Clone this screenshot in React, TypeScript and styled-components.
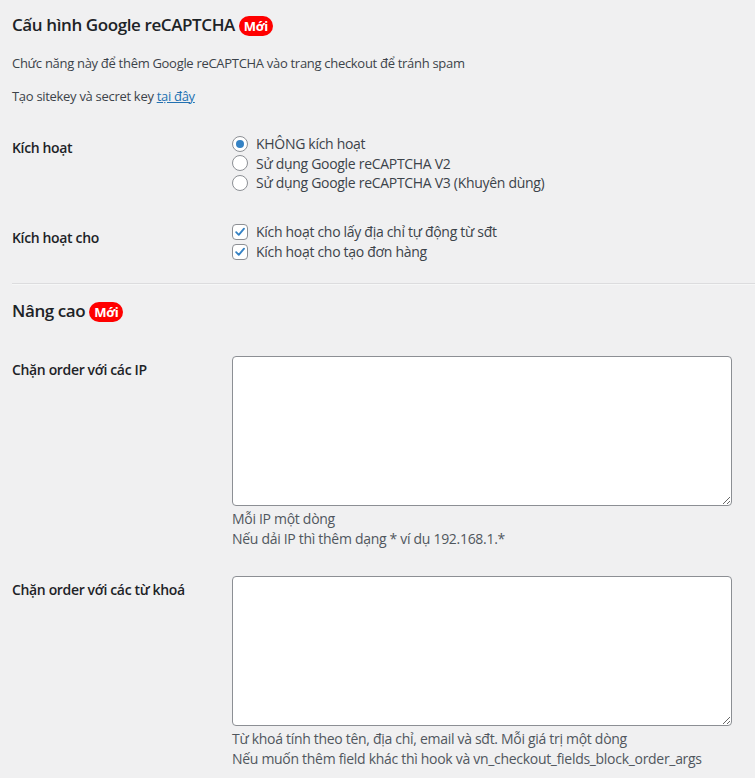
import React, { useState } from 'react';
import styled, { createGlobalStyle } from 'styled-components';

// WordPress admin palette
const colors = {
  bg: '#f0f0f1',
  text: '#3c434a',
  heading: '#1d2327',
  muted: '#50575e',
  link: '#2271b1',
  border: '#8c8f94',
  blue: '#3582c4',
  divider: '#dcdcde',
  badge: '#ff0000',
};

const GlobalStyle = createGlobalStyle`
  body {
    margin: 0;
    background: ${colors.bg};
    color: ${colors.text};
    font-family: "Open Sans", "Noto Sans", sans-serif;
    font-size: 13px;
    letter-spacing: -0.3px;
  }
  * { box-sizing: border-box; }
`;

const Page = styled.div`
  padding: 13px 0 0 12px;
`;

const Heading = styled.h2<{ $top?: number }>`
  display: flex;
  align-items: center;
  gap: 4px;
  margin: ${(p) => p.$top ?? 0}px 0 17px;
  font-size: 17px;
  font-weight: 600;
  line-height: 24px;
  letter-spacing: -0.4px;
  color: ${colors.heading};
`;

const Badge = styled.span`
  display: inline-block;
  height: 20px;
  padding: 0 5px;
  border-radius: 10px;
  background: ${colors.badge};
  color: #fff;
  font-size: 13px;
  font-weight: 700;
  line-height: 20px;
  letter-spacing: -0.3px;
  margin-top: 2px;
`;

const Para = styled.p`
  margin: 13px 0;
  line-height: 19.5px;
`;

const Link = styled.a`
  color: ${colors.link};
  text-decoration: underline;
`;

const Row = styled.div<{ $top?: number }>`
  display: flex;
  margin-top: ${(p) => p.$top ?? 0}px;
`;

const Th = styled.div`
  width: 210px;
  flex-shrink: 0;
  padding: 20px 10px 20px 0;
  font-size: 14px;
  font-weight: 600;
  line-height: 1.3;
  letter-spacing: -0.35px;
  color: ${colors.heading};
`;

const Td = styled.div<{ $pt: number; $pb: number }>`
  flex: 1;
  padding: ${(p) => p.$pt}px 10px ${(p) => p.$pb}px 10px;
  font-size: 14px;
`;

const Option = styled.label<{ $lh: number }>`
  display: flex;
  align-items: center;
  gap: 8px;
  line-height: ${(p) => p.$lh}px;
  color: ${colors.text};
  cursor: pointer;
`;

const HiddenInput = styled.input`
  display: none;
`;

const RadioCircle = styled.span<{ $on: boolean }>`
  width: 16px;
  height: 16px;
  flex-shrink: 0;
  border: 1px solid ${colors.border};
  border-radius: 50%;
  background: #fff;
  display: flex;
  align-items: center;
  justify-content: center;

  &::before {
    content: '';
    width: 8px;
    height: 8px;
    border-radius: 50%;
    background: ${colors.blue};
    display: ${(p) => (p.$on ? 'block' : 'none')};
  }
`;

const CheckBox = styled.span`
  width: 16px;
  height: 16px;
  flex-shrink: 0;
  border: 1px solid ${colors.border};
  border-radius: 4px;
  background: #fff;
  display: flex;
  align-items: center;
  justify-content: center;
`;

const Divider = styled.hr`
  margin: 16px 0 0;
  border: 0;
  border-top: 1px solid ${colors.divider};
  border-bottom: 1px solid #f6f7f7;
`;

const TextArea = styled.textarea`
  display: block;
  width: 500px;
  height: 150px;
  margin: 0;
  padding: 2px 6px;
  border: 1px solid ${colors.border};
  border-radius: 4px;
  background: #fff;
  font-family: inherit;
  font-size: 14px;
  color: ${colors.heading};
`;

const Description = styled.p`
  margin: 3px 0 0;
  line-height: 20px;
  color: ${colors.muted};
`;

const radios = [
  'KHÔNG kích hoạt',
  'Sử dụng Google reCAPTCHA V2',
  'Sử dụng Google reCAPTCHA V3 (Khuyên dùng)',
];

const checks = ['Kích hoạt cho lấy địa chỉ tự động từ sđt', 'Kích hoạt cho tạo đơn hàng'];

const App: React.FC = () => {
  const [mode, setMode] = useState(0);
  const [enabled, setEnabled] = useState([true, true]);

  const toggle = (i: number) =>
    setEnabled((prev) => prev.map((v, j) => (j === i ? !v : v)));

  return (
    <Page>
      <GlobalStyle />
      <Heading>
        Cấu hình Google reCAPTCHA <Badge>Mới</Badge>
      </Heading>
      <Para>Chức năng này để thêm Google reCAPTCHA vào trang checkout để tránh spam</Para>
      <Para>
        Tạo sitekey và secret key <Link href="#">tại đây</Link>
      </Para>

      <Row $top={13}>
        <Th>Kích hoạt</Th>
        <Td $pt={15} $pb={16}>
          {radios.map((label, i) => (
            <Option key={label} $lh={19.5}>
              <HiddenInput type="radio" name="recaptcha" checked={mode === i} onChange={() => setMode(i)} />
              <RadioCircle $on={mode === i} />
              {label}
            </Option>
          ))}
        </Td>
      </Row>

      <Row>
        <Th>Kích hoạt cho</Th>
        <Td $pt={13} $pb={0}>
          {checks.map((label, i) => (
            <Option key={label} $lh={20}>
              <HiddenInput type="checkbox" checked={enabled[i]} onChange={() => toggle(i)} />
              <CheckBox>
                {enabled[i] && (
                  <svg width="16" height="16" viewBox="0 0 16 16">
                    <path d="M3.6 8.2 L6.6 11.2 L12.6 4.2" fill="none" stroke={colors.blue} strokeWidth="2.1" strokeLinecap="round" strokeLinejoin="round" />
                  </svg>
                )}
              </CheckBox>
              {label}
            </Option>
          ))}
        </Td>
      </Row>

      <Divider />

      <Heading $top={14}>
        Nâng cao <Badge>Mới</Badge>
      </Heading>

      <Row $top={18}>
        <Th>Chặn order với các IP</Th>
        <Td $pt={15} $pb={12}>
          <TextArea />
          <Description>
            Mỗi IP một dòng
            <br />
            Nếu dải IP thì thêm dạng * ví dụ 192.168.1.*
          </Description>
        </Td>
      </Row>

      <Row>
        <Th>Chặn order với các từ khoá</Th>
        <Td $pt={15} $pb={12}>
          <TextArea />
          <Description>
            Từ khoá tính theo tên, địa chỉ, email và sđt. Mỗi giá trị một dòng
            <br />
            Nếu muốn thêm field khác thì hook và vn_checkout_fields_block_order_args
          </Description>
        </Td>
      </Row>
    </Page>
  );
};

export default App;
